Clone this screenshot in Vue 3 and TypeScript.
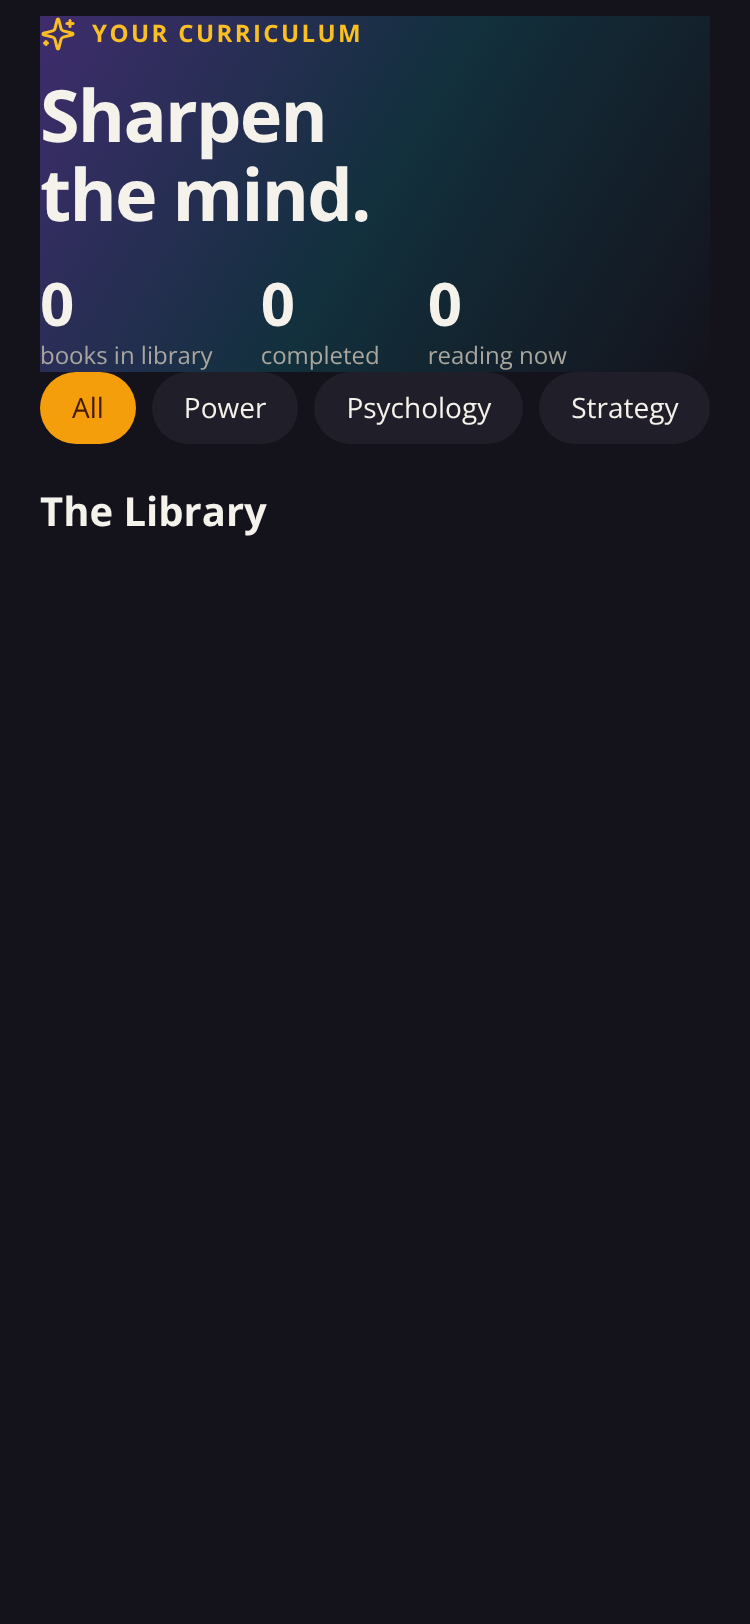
<script setup lang="ts">
const stats = [
  { value: 0, label: 'books in library' },
  { value: 0, label: 'completed' },
  { value: 0, label: 'reading now' },
]
const chips = ['All', 'Power', 'Psychology', 'Strategy']
</script>

<template>
  <div class="page">
    <section class="hero">
      <div class="eyebrow">
        <svg class="spark" viewBox="0 0 24 24" fill="none" stroke="currentColor" stroke-width="2" stroke-linecap="round" stroke-linejoin="round">
          <path d="M9.937 15.5A2 2 0 0 0 8.5 14.063l-6.135-1.582a.5.5 0 0 1 0-.962L8.5 9.936A2 2 0 0 0 9.937 8.5l1.582-6.135a.5.5 0 0 1 .963 0L14.063 8.5A2 2 0 0 0 15.5 9.937l6.135 1.581a.5.5 0 0 1 0 .964L15.5 14.063a2 2 0 0 0-1.437 1.437l-1.582 6.135a.5.5 0 0 1-.963 0z" />
          <path d="M20 3v4" />
          <path d="M22 5h-4" />
          <path d="M4 17v2" />
          <path d="M5 18H3" />
        </svg>
        <span>YOUR CURRICULUM</span>
      </div>
      <h1>Sharpen<br />the mind.</h1>
      <div class="stats">
        <div v-for="s in stats" :key="s.label" class="stat">
          <div class="num">{{ s.value }}</div>
          <div class="label">{{ s.label }}</div>
        </div>
      </div>
    </section>
    <nav class="chips">
      <button v-for="(c, i) in chips" :key="c" class="chip" :class="{ active: i === 0 }">{{ c }}</button>
    </nav>
    <h2>The Library</h2>
  </div>
</template>

<style>
html, body { margin: 0; background: #14131c; }
</style>

<style scoped>
.page {
  box-sizing: border-box;
  min-height: 1624px;
  padding: 16px 40px 0;
  background: #14131c;
  font-family: "Open Sans", sans-serif;
  color: #f5f2ec;
  text-rendering: geometricPrecision;
  -webkit-font-smoothing: antialiased;
}
.hero {
  display: flex;
  flex-direction: column;
  height: 356px;
  background: linear-gradient(120deg, #3f2c6d 0%, #12303d 50%, #14131c 100%);
}
.eyebrow {
  display: flex;
  align-items: flex-start;
  gap: 16px;
  height: 36px;
  color: #fbbf24;
  font-size: 24px;
  line-height: 36px;
  font-weight: 700;
  letter-spacing: 2.4px;
  will-change: transform;
}
.spark { width: 36px; height: 36px; flex: none; }
h1 {
  margin: 24px 0 0;
  font-size: 72px;
  line-height: 79.2px;
  font-weight: 700;
  letter-spacing: -1.8px;
  will-change: transform;
}
.stats { display: flex; gap: 48px; margin-top: auto; will-change: transform; }
.num { font-size: 60px; line-height: 72px; font-weight: 700; }
.label { font-size: 24px; color: #a8a69f; }
.chips { display: flex; gap: 16px; will-change: transform; }
.chip {
  height: 72px;
  padding: 0 32px;
  border: 0;
  border-radius: 36px;
  background: #201e28;
  color: #f5f2ec;
  font: 400 28px "Open Sans", sans-serif;
  text-rendering: geometricPrecision;
}
.chip.active { background: #f59e0b; color: #451a03; }
h2 {
  margin: 39px 0 0;
  font-size: 40px;
  font-weight: 700;
  will-change: transform;
}
</style>
